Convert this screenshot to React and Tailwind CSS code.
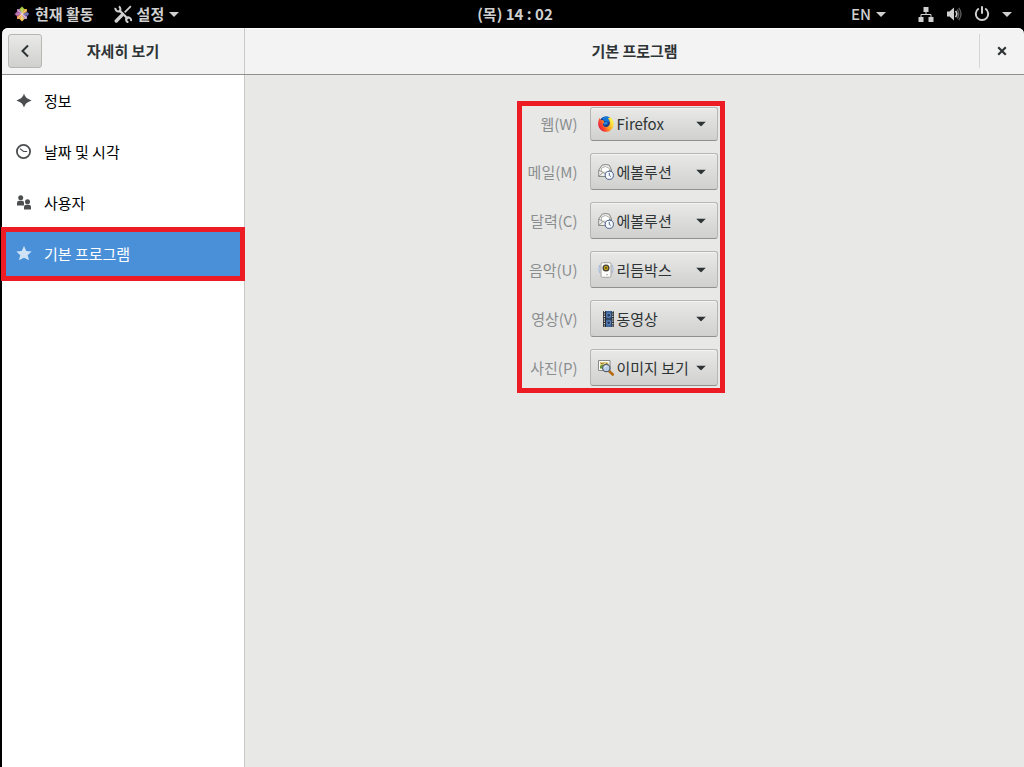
import { useState } from "react";

const MENU = [
  { id: "info", label: "정보", icon: SparkIcon },
  { id: "datetime", label: "날짜 및 시각", icon: ClockIcon },
  { id: "users", label: "사용자", icon: UsersIcon },
  { id: "defaults", label: "기본 프로그램", icon: StarIcon },
];

const PROGRAMS = [
  { id: "web", label: "웹(W)", value: "Firefox", icon: FirefoxIcon, height: "h-[34px]" },
  { id: "mail", label: "메일(M)", value: "에볼루션", icon: EvolutionIcon, height: "h-[37px]" },
  { id: "calendar", label: "달력(C)", value: "에볼루션", icon: EvolutionIcon, height: "h-[37px]" },
  { id: "music", label: "음악(U)", value: "리듬박스", icon: RhythmboxIcon, height: "h-[37px]" },
  { id: "video", label: "영상(V)", value: "동영상", icon: FilmIcon, height: "h-[37px]" },
  { id: "photos", label: "사진(P)", value: "이미지 보기", icon: ImageViewerIcon, height: "h-[37px]" },
];

// ── Icons ──────────────────────────────────────────────────────────────────
function Caret({ className }) {
  return (
    <svg viewBox="0 0 10 5" className={className} fill="currentColor" aria-hidden="true">
      <path d="M0 0h10L5 5z" />
    </svg>
  );
}

function LogoIcon() {
  return (
    <svg viewBox="0 0 16 16" className="h-4 w-4" aria-hidden="true">
      <path d="M3 3h5v5H3z" fill="#b07bb5" />
      <path d="M8 3h5v5H8z" fill="#eda93b" />
      <path d="M3 8h5v5H3z" fill="#f09b50" />
      <path d="M8 8h5v5H8z" fill="#b990c0" />
      <path d="M8 0.500 10.500 3 8 7 5.500 3z" fill="#a6cc42" />
      <path d="M15.500 8 13 10.500 9 8l4-2.500z" fill="#514f91" />
      <path d="M8 15.500 5.500 13 8 9l2.500 4z" fill="#efc25c" />
      <path d="M0.500 8 3 5.500 7 8l-4 2.500z" fill="#a5539a" />
      <path d="M8 3v10M2 8h12M4 4l8 8M12 4l-8 8" stroke="#eee" strokeWidth="0.500" />
    </svg>
  );
}

function ToolsIcon() {
  return (
    <svg viewBox="0 0 16 16" className="h-[18px] w-[18px]" fill="none" stroke="currentColor" aria-hidden="true">
      <path d="M4.500 4.500l8 8" strokeWidth="2" />
      <path d="M1.200 2.600a3 3 0 0 0 3.600 3.200A3 3 0 0 0 4.400 1.200M11.200 11.300a2.800 2.800 0 0 1 4 3M11.200 11.300a2.800 2.800 0 0 0 1.600 4.200" strokeWidth="1.800" />
      <path d="M15 1l-5.500 5.500" strokeWidth="1.600" />
      <path d="M7.500 8.500L2 14.200" strokeWidth="3" strokeLinecap="round" />
    </svg>
  );
}

function NetworkIcon() {
  return (
    <svg viewBox="0 0 16 16" className="h-4 w-4" fill="currentColor" aria-hidden="true">
      <path d="M5.500 1h5v5h-5zM0.500 11h5v5h-5zM10.500 11h5v5h-5z" />
      <path d="M8 6v2.500M3 11V8.500h10V11" fill="none" stroke="currentColor" />
    </svg>
  );
}

function VolumeIcon() {
  return (
    <svg viewBox="0 0 16 16" className="h-4 w-4" aria-hidden="true">
      <path d="M1 5.500h2.500L8 1.500v13l-4.500-4H1z" fill="currentColor" />
      <path d="M9.500 5a4.500 4.500 0 0 1 0 6" fill="none" stroke="currentColor" strokeWidth="1.600" />
      <path d="M11 3.500a6.500 6.500 0 0 1 0 9M12.700 2a9 9 0 0 1 0 12" fill="none" stroke="#5a5a5a" strokeWidth="1.400" />
    </svg>
  );
}

function PowerIcon() {
  return (
    <svg viewBox="0 0 16 16" className="h-4 w-4" fill="none" stroke="currentColor" strokeWidth="2" strokeLinecap="round" aria-hidden="true">
      <path d="M8 1v6M4.200 3a6.200 6.200 0 1 0 7.600 0" />
    </svg>
  );
}

function SparkIcon() {
  return (
    <svg viewBox="0 0 16 16" className="h-4 w-4" fill="currentColor" aria-hidden="true">
      <path d="M8 0.500C8.800 3 9.800 4.600 11.500 5.600L15.500 7.500l-4 1.900C9.800 10.400 8.800 12 8 14.500 7.200 12 6.200 10.400 4.500 9.400L0.500 7.500l4-1.900C6.200 4.600 7.200 3 8 0.500z" />
    </svg>
  );
}

function ClockIcon() {
  return (
    <svg viewBox="0 0 16 16" className="h-4 w-4" fill="none" stroke="currentColor" aria-hidden="true">
      <circle cx="7.500" cy="7.500" r="6.600" strokeWidth="1.800" />
      <path d="M4 4.600L7.600 7.500h3.600" strokeWidth="1.200" />
    </svg>
  );
}

function UsersIcon() {
  return (
    <svg viewBox="0 0 16 16" className="h-4 w-4" fill="currentColor" aria-hidden="true">
      <circle cx="4.700" cy="2.800" r="2.500" />
      <path d="M1 10.500V8Q1 5.800 3.200 5.800h3Q8 5.800 8 8v2.500z" />
      <circle cx="11.500" cy="6.800" r="2.500" />
      <path d="M8 14.500V12q0-2.200 2.200-2.200h2.600Q15 9.800 15 12v2.500z" />
    </svg>
  );
}

function StarIcon() {
  return (
    <svg viewBox="0 0 16 16" className="h-4 w-4" fill="currentColor" aria-hidden="true">
      <path d="M8 0l2.300 4.900 5.300 0.700-3.900 3.700 1.400 5L8 11.700l-5.100 2.600 1.400-5L0.400 5.600l5.300-0.700z" />
    </svg>
  );
}

function FirefoxIcon() {
  return (
    <svg viewBox="0 0 16 16" className="h-4 w-4" aria-hidden="true">
      <defs>
        <linearGradient id="fox" x1="0.900" y1="0.300" x2="0.100" y2="0.700">
          <stop offset="0" stopColor="#fff04a" />
          <stop offset="0.400" stopColor="#ffa51f" />
          <stop offset="0.750" stopColor="#ff4c2c" />
          <stop offset="1" stopColor="#e8243f" />
        </linearGradient>
      </defs>
      <circle cx="8" cy="7.800" r="7.200" fill="#1a3f90" />
      <path d="M4 1.800C7 0 10 .3 11.500 1.800L11 6 6 5z" fill="#1478d8" />
      <path d="M1.500 2l1.500 2.300L5 4l1.500 2.500L4.800 8c.2 2.500 2.500 3.500 4.700 2.700 2.200-.8 3-3 2-5.700-.4-1.300-1-2-1.700-2.700L12.500 1.500c2.600 2 3.500 5 3.100 7.800A7.700 7.700 0 0 1 8 15.800C3.500 15.800.2 12.200.2 8c0-2.200.4-4.500 1.300-6z" fill="url(#fox)" />
      <path d="M5 8.300l3 .4 1.800-1.200-1-1.700-2.300.6z" fill="#2a8fe0" />
    </svg>
  );
}

function EvolutionIcon() {
  return (
    <svg viewBox="0 0 16 16" className="h-4 w-4" fill="none" aria-hidden="true">
      <path d="M0.700 6L4 1.200Q8-.2 11.300 1.200L13.500 6v6.500H0.700z" fill="#efefed" stroke="#888a85" />
      <path d="M3.500 7V4l4-1.500 4 2V7" fill="#fff" stroke="#a0a29c" strokeWidth="0.800" />
      <path d="M1 6.300l6 3.200 6-3.500M1 12.300l4-4" stroke="#888a85" strokeWidth="0.900" />
      <circle cx="11.300" cy="11.300" r="4.100" fill="#f7f9fc" stroke="#44608f" />
      <path d="M11.300 8.800v2.700l1.600 1" stroke="#44608f" strokeWidth="0.900" />
    </svg>
  );
}

function RhythmboxIcon() {
  return (
    <svg viewBox="0 0 16 16" className="h-4 w-4" fill="none" aria-hidden="true">
      <path d="M1.700 3Q0 7 1.700 11M14.300 3Q16 7 14.300 11" stroke="#9db9dd" />
      <rect x="3" y="0.700" width="10" height="14.600" rx="1.500" fill="#fcfcfb" stroke="#a2a49f" />
      <circle cx="8" cy="6" r="3.500" fill="#454238" />
      <circle cx="8" cy="6" r="2.200" fill="#c5a51d" />
      <circle cx="8" cy="6" r="0.900" fill="#4d491f" />
      <path d="M8 12.700h2" stroke="#b0b0ad" />
    </svg>
  );
}

function FilmIcon() {
  return (
    <svg viewBox="0 0 16 16" className="h-4 w-4" fill="none" aria-hidden="true">
      <path d="M5 0h11v16H5z" fill="#292d31" />
      <path d="M8 0h5.500v7.500H8zM8 8.500h5.500V16H8z" fill="#3c659d" />
      <path d="M6.400 0v16M14.800 0v16" stroke="#e7e7e5" strokeWidth="1.200" strokeDasharray="1.200 1.200" />
      <circle cx="10.700" cy="4.200" r="1.900" fill="#243e6a" stroke="#83a4cf" strokeWidth="0.700" />
      <circle cx="10.700" cy="11.800" r="1.900" fill="#243e6a" stroke="#83a4cf" strokeWidth="0.700" />
    </svg>
  );
}

function ImageViewerIcon() {
  return (
    <svg viewBox="0 0 16 16" className="h-4 w-4" fill="none" aria-hidden="true">
      <path d="M0.500 0.500h11.500v10H0.500z" fill="#fff" stroke="#888a85" />
      <path d="M2 2h8.500v6.500H2z" fill="#e4dc8a" />
      <path d="M2 6l2.500-1.500L7 7v1.500H2z" fill="#6a9438" />
      <path d="M2.500 3l2 1 1.500-1.500M8 3l1.500 1" stroke="#97661b" />
      <path d="M11.500 11.500l3.300 3" stroke="#b56a10" strokeWidth="2.600" strokeLinecap="round" />
      <circle cx="8.300" cy="8" r="3.700" fill="#b9d0e8" stroke="#596069" strokeWidth="1.200" />
      <path d="M6.500 7.500Q7 6 8.500 6" stroke="#fff" />
    </svg>
  );
}

// ── Parts ──────────────────────────────────────────────────────────────────
function TopBar() {
  return (
    <header className="grid h-7 grid-cols-[1fr_auto_1fr] items-center bg-black pl-[14px] pr-2 font-bold text-[#d0d0d0]">
      <div className="flex items-center gap-5">
        <button type="button" className="flex items-center gap-[5px]">
          <LogoIcon />
          현재 활동
        </button>
        <button type="button" className="flex items-center gap-[5px]">
          <ToolsIcon />
          설정
          <Caret className="h-[5px] w-[10px]" />
        </button>
      </div>
      <time>(목) 14 : 02</time>
      <div className="flex items-center justify-end">
        <button type="button" className="mr-8 flex items-center gap-[5px] font-medium">
          EN
          <Caret className="h-[5px] w-[10px]" />
        </button>
        <button type="button" aria-label="시스템" className="flex items-center gap-3 pr-1">
          <NetworkIcon />
          <VolumeIcon />
          <PowerIcon />
          <Caret className="h-[5px] w-[10px]" />
        </button>
      </div>
    </header>
  );
}

function Sidebar({ active, onSelect }) {
  return (
    <nav className="w-[243px] shrink-0 border-r border-[#c9c9c6] bg-white">
      <ul>
        {MENU.map(({ id, label, icon: Icon }) => {
          const selected = id === active;
          return (
            <li key={id} className="relative">
              <button
                type="button"
                onClick={() => onSelect(id)}
                className={`flex h-[51px] w-full items-center gap-3 pl-[14px] text-left
                  ${selected ? "bg-[#4a90d9] text-white" : "text-black"}`}
              >
                <span className={selected ? "text-[#cfe2f6]" : "text-[#4b4d4e]"}>
                  <Icon />
                </span>
                {label}
              </button>
              {selected && (
                <span className="pointer-events-none absolute -inset-x-px -top-px -bottom-[2px] border-[5px] border-[#ed1c24]" />
              )}
            </li>
          );
        })}
      </ul>
    </nav>
  );
}

function ProgramRow({ id, label, value, icon: Icon, height }) {
  return (
    <div className="flex items-center justify-end gap-3">
      <label htmlFor={id} className="text-[#8b8e8f]">
        {label}
      </label>
      <div className="relative w-32 text-[#2e3436]">
        <select
          id={id}
          defaultValue={value}
          className={`block w-full appearance-none rounded-[3px] border border-[#b6b6b3] border-b-[#91918c]
            bg-linear-to-b from-[#e9e9e7] to-[#d0d0ce] pl-[26px] shadow-[inset_0_1px_#f4f4f3] ${height}`}
        >
          <option>{value}</option>
        </select>
        <span className="pointer-events-none absolute inset-y-0 left-2 flex items-center">
          <Icon />
        </span>
        <Caret className="pointer-events-none absolute top-1/2 right-3 h-[5px] w-[10px] -translate-y-1/2" />
      </div>
    </div>
  );
}

export default function App() {
  const [active, setActive] = useState("defaults");

  return (
    <div className="flex min-h-screen flex-col bg-black font-['Noto_Sans_CJK_KR',sans-serif] text-[15px] leading-5">
      <TopBar />
      <div className="flex grow flex-col pl-[2px]">
        <div className="flex h-[47px] rounded-t-md border-b border-[#8f8f8b] bg-[#f3f3f3] font-bold text-[#2e3436] shadow-[inset_0_1px_#fff]">
          <div className="grid w-[243px] shrink-0 grid-cols-[1fr_auto_1fr] items-center border-r border-[#c9c9c6] px-[6px]">
            <button
              type="button"
              aria-label="뒤로"
              className="flex h-[34px] w-[34px] items-center justify-center rounded-[3px] border border-[#b6b6b3] bg-linear-to-b from-[#e9e9e7] to-[#d0d0ce]"
            >
              <svg viewBox="0 0 16 16" className="h-4 w-4" fill="none" stroke="currentColor" strokeWidth="2" aria-hidden="true">
                <path d="M11 2.500L5.500 8l5.500 5.500" />
              </svg>
            </button>
            <h2>자세히 보기</h2>
          </div>
          <div className="grid grow grid-cols-[1fr_auto_1fr] items-center">
            <h1 className="col-start-2">기본 프로그램</h1>
            <div className="flex justify-end">
              <button
                type="button"
                aria-label="닫기"
                className="flex h-[34px] w-[45px] items-center justify-center border-l border-[#d6d6d4]"
              >
                <svg viewBox="0 0 10 10" className="h-[10px] w-[10px]" fill="none" stroke="currentColor" strokeWidth="2.200" aria-hidden="true">
                  <path d="M1.200 1.200l7.600 7.600M8.800 1.200L1.200 8.800" />
                </svg>
              </button>
            </div>
          </div>
        </div>

        <div className="flex grow">
          <Sidebar active={active} onSelect={setActive} />
          <main className="grow bg-[#e8e8e7] pt-[26px] pr-7">
            <div className="mx-auto flex w-[208px] flex-col gap-3 border-[5px] border-[#ed1c24] pt-px pr-[2px] pb-[2px]">
              {PROGRAMS.map((program) => (
                <ProgramRow key={program.id} {...program} />
              ))}
            </div>
          </main>
        </div>
      </div>
    </div>
  );
}
